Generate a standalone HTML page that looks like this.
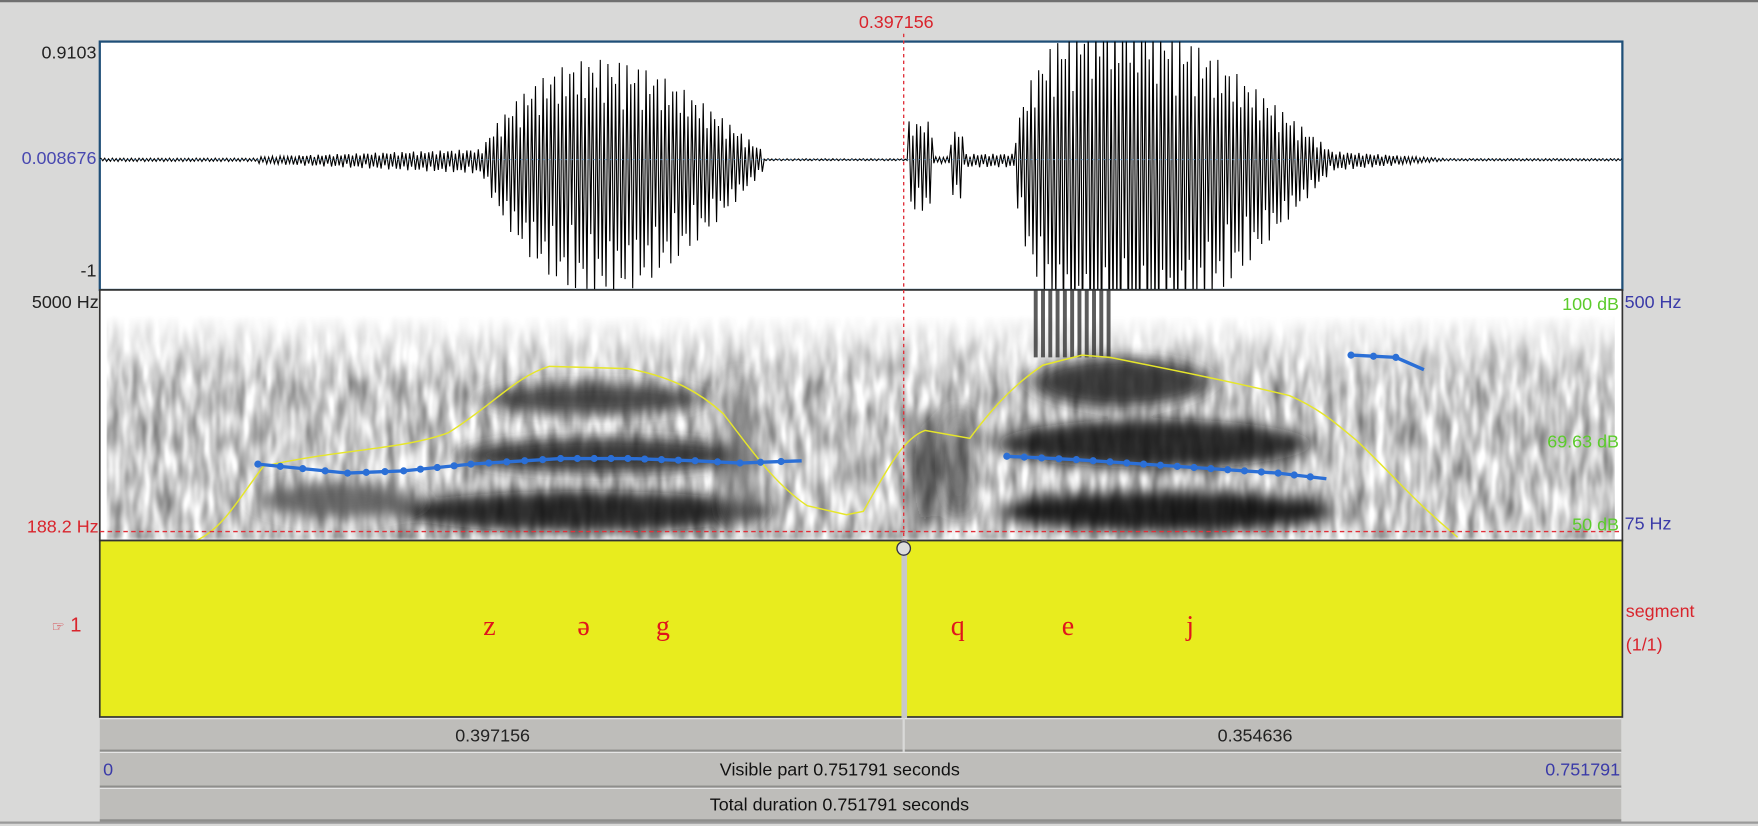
<!DOCTYPE html>
<html><head><meta charset="utf-8">
<style>
html,body{margin:0;padding:0;width:1758px;height:826px;overflow:hidden;background:#d9d9d8}
#w{position:absolute;left:0;top:0;width:1568px;height:735px;transform:scale(1.1212,1.1238);transform-origin:0 0;font-family:"Liberation Sans",Arial,sans-serif;}
.t{position:absolute;font-size:16px;white-space:nowrap;line-height:17px}
.r{text-align:right}
.bar{position:absolute;background:#bebdba;border-top:1px solid #e8e8e8;border-bottom:2px solid #8e8e8c;box-sizing:border-box}
.ph{position:absolute;font-family:"Liberation Serif",serif;color:#e0161c;font-size:25px;top:544px}
</style></head><body>
<div id="w">
<div style="position:absolute;left:0;top:0;width:1568px;height:2px;background:#707070"></div>
<div class="t" style="left:766px;top:12px;color:#d9242c">0.397156</div>
<div class="t r" style="left:0;width:86px;top:39px;color:#222">0.9103</div>
<div class="t r" style="left:0;width:86px;top:133px;color:#4848b0">0.008676</div>
<div class="t r" style="left:0;width:86px;top:233px;color:#222">-1</div>
<div class="t r" style="left:0;width:88px;top:261px;color:#222">5000 Hz</div>
<div class="t r" style="left:0;width:88px;top:461px;color:#d9242c">188.2 Hz</div>
<div class="t" style="left:1449px;top:261px;color:#3a3aa8">500 Hz</div>
<div class="t" style="left:1449px;top:458px;color:#3a3aa8">75 Hz</div>
<div class="t" style="left:46px;top:548px;color:#d9242c;font-size:18px"><span style="font-size:13px">☞</span> 1</div>
<div class="t" style="left:1450px;top:536px;color:#d9242c">segment</div>
<div class="t" style="left:1450px;top:566px;color:#d9242c">(1/1)</div>

<svg style="position:absolute;left:0;top:0" width="1568" height="735">
<defs>
<filter id="n" x="0" y="0" width="100%" height="100%">
<feTurbulence type="fractalNoise" baseFrequency="0.11 0.03" numOctaves="2" seed="4"/>
<feColorMatrix type="matrix" values="0 0 0 0 0  0 0 0 0 0  0 0 0 0 0  0 0 0 -1.4 1.05"/>
<feGaussianBlur stdDeviation="0.8 1.5"/>
</filter>
<filter id="b"><feGaussianBlur stdDeviation="10 6"/></filter>
<clipPath id="wc"><rect x="89" y="37" width="1358" height="221"/></clipPath>
<clipPath id="sc"><rect x="89" y="258" width="1358" height="223"/></clipPath>
<linearGradient id="fade" x1="0" y1="0" x2="0" y2="1">
<stop offset="0" stop-color="#fff" stop-opacity="0"/><stop offset="0.3" stop-color="#fff" stop-opacity="1"/></linearGradient>
<mask id="m"><rect x="89" y="280" width="1358" height="201" fill="url(#fade)"/></mask>
</defs>
<rect x="89" y="37" width="1358" height="221" fill="#fff" stroke="#1f4f78" stroke-width="2"/>
<g clip-path="url(#wc)"><path id="wave" d="" fill="none" stroke="#000" stroke-width="1"/></g>
<line x1="89" y1="142" x2="1447" y2="142" stroke="#5a9ad0" stroke-width="1" stroke-dasharray="2 3" opacity="0.6"/>
<rect x="89" y="258" width="1358" height="223" fill="#fff" stroke="#333" stroke-width="1.5"/>
<g clip-path="url(#sc)">
<g mask="url(#m)" opacity="0.6"><rect x="95" y="280" width="1345" height="200" fill="#000" filter="url(#n)"/></g>
<g filter="url(#b)" opacity="0.85">
<ellipse cx="520" cy="455" rx="170" ry="18" fill="#111"/>
<ellipse cx="540" cy="405" rx="130" ry="16" fill="#222"/>
<ellipse cx="530" cy="355" rx="100" ry="14" fill="#333"/>
<ellipse cx="300" cy="445" rx="70" ry="16" fill="#555"/>
<ellipse cx="1040" cy="455" rx="150" ry="18" fill="#000"/>
<ellipse cx="1030" cy="395" rx="140" ry="22" fill="#111"/>
<ellipse cx="1000" cy="340" rx="80" ry="22" fill="#222"/>
<ellipse cx="825" cy="420" rx="10" ry="55" fill="#111"/>
<ellipse cx="855" cy="410" rx="10" ry="50" fill="#333"/>
<ellipse cx="660" cy="400" rx="10" ry="70" fill="#555"/>
</g>
<g id="stri"></g>
<path d="M175,481 C200,470 215,440 235,415 C300,400 360,400 400,385 C440,360 460,335 490,326 L560,328 C600,335 625,350 645,368 C670,400 690,430 720,450 L755,458 L770,455 C790,420 805,390 825,383 L865,390 C880,370 900,345 930,325 L965,316 L990,318 C1050,330 1100,340 1150,352 C1180,365 1195,380 1210,392 C1240,420 1260,445 1300,478" fill="none" stroke="#e6e62a" stroke-width="1.3"/>
<path id="p1" d="" fill="none" stroke="#2b6fd6" stroke-width="3"/>
<g id="dots" fill="#2b6fd6"></g>
</g>
<text x="1444" y="276" text-anchor="end" fill="#5ccb2c" font-size="16" font-family="Liberation Sans">100 dB</text>
<text x="1444" y="398" text-anchor="end" fill="#5ccb2c" font-size="16" font-family="Liberation Sans">69.63 dB</text>
<text x="1444" y="472" text-anchor="end" fill="#5ccb2c" font-size="16" font-family="Liberation Sans">50 dB</text>
<line x1="89" y1="473" x2="1447" y2="473" stroke="#e0303a" stroke-width="1.3" stroke-dasharray="4 3"/>
<line x1="806" y1="30" x2="806" y2="481" stroke="#e0303a" stroke-width="1.2" stroke-dasharray="3 3"/>
<rect x="89" y="481" width="1358" height="157" fill="#e8ec1e" stroke="#333" stroke-width="1.5"/>
<rect x="804" y="481" width="5" height="158" fill="#c8c8c8"/>
<circle cx="806" cy="488" r="6" fill="#ddd" stroke="#334" stroke-width="1.2"/>
</svg>

<div class="ph" style="left:431px">z</div>
<div class="ph" style="left:515px">ə</div>
<div class="ph" style="left:585px">g</div>
<div class="ph" style="left:848px">q</div>
<div class="ph" style="left:947px">e</div>
<div class="ph" style="left:1058px">j</div>

<div class="bar" style="left:89px;top:639px;width:716px;height:30px"></div>
<div class="bar" style="left:807px;top:639px;width:639px;height:30px"></div>
<div class="t" style="left:406px;top:647px;color:#222">0.397156</div>
<div class="t" style="left:1086px;top:647px;color:#222">0.354636</div>
<div class="bar" style="left:89px;top:669px;width:1357px;height:32px"></div>
<div class="t" style="left:92px;top:677px;color:#3a3aa8">0</div>
<div class="t" style="left:642px;top:677px;color:#111">Visible part 0.751791 seconds</div>
<div class="t r" style="left:1300px;width:145px;top:677px;color:#3a3aa8">0.751791</div>
<div class="bar" style="left:89px;top:701px;width:1357px;height:30px"></div>
<div class="t" style="left:633px;top:708px;color:#111">Total duration 0.751791 seconds</div>
<div style="position:absolute;left:0;top:731px;width:1568px;height:2px;background:#9a9a9a"></div>
</div>
<script>
(function(){
function env(x){
 if(x<230)return 1.5;
 if(x<430)return 3+8*(x-230)/200;
 if(x<680){var c=(x-430)/250;return 10+95*Math.sin(Math.PI*Math.pow(c,0.8));}
 if(x<810)return 0.8;
 if(x<832)return 40;
 if(x<848)return 3;
 if(x<860)return 30;
 if(x<905)return 6;
 if(x<1185){var c=(x-905)/280;return 12+140*Math.sin(Math.PI*Math.pow(c,0.6));}
 if(x<1290)return 8*(1-(x-1185)/105)+1;
 return 1;
}
var d="M89,142",s=1;
for(var x=90;x<1447;x+=1.7){
 var e=env(x);s=-s;var r=0.5+0.5*Math.abs(Math.sin(x*1.3));
 var y=142+s*e*r*(s>0?1.15:0.85);
 d+=" L"+x.toFixed(1)+","+y.toFixed(1);
}
document.getElementById("wave").setAttribute("d",d);
var st="";
for(var x=922;x<992;x+=6.5){st+='<rect x="'+x+'" y="258" width="3.5" height="60" fill="#333" opacity="0.8"/>';}
document.getElementById("stri").innerHTML=st;
var segs=[[[230,413],[270,417],[310,421],[360,419],[420,413],[500,408],[560,408],[620,410],[660,412],[715,410]],
[[898,406],[960,409],[1020,413],[1080,417],[1140,421],[1183,426]],
[[1205,316],[1245,318],[1270,329]]];
var p="",dots="";
segs.forEach(function(sg){
 p+="M"+sg[0].join(",");
 for(var i=1;i<sg.length;i++)p+=" L"+sg[i].join(",");
 for(var i=0;i<sg.length-1;i++){
  var a=sg[i],b=sg[i+1],n=Math.max(1,Math.round((b[0]-a[0])/17));
  for(var k=0;k<n;k++){var t=k/n;dots+='<circle cx="'+(a[0]+(b[0]-a[0])*t)+'" cy="'+(a[1]+(b[1]-a[1])*t)+'" r="3.2"/>';}
 }
});
document.getElementById("p1").setAttribute("d",p);
document.getElementById("dots").innerHTML=dots;
})();
</script>
</body></html>
